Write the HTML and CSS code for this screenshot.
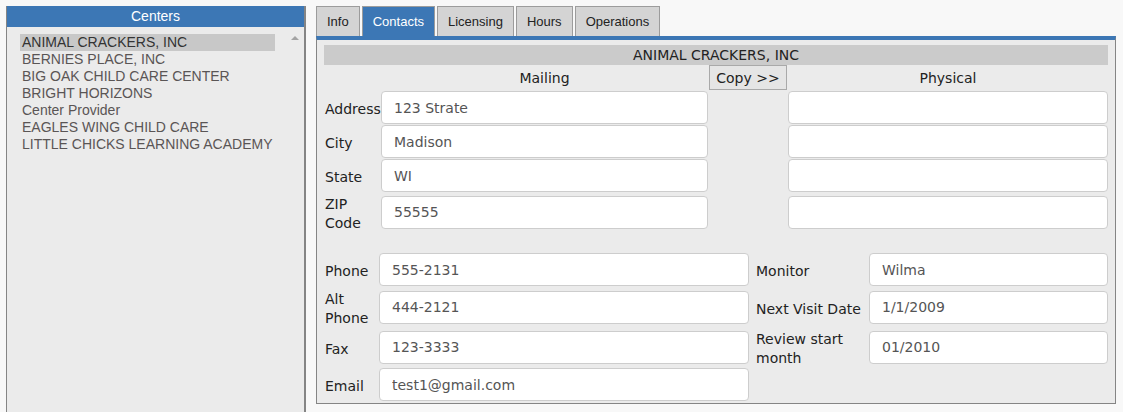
FILE: index.html
```html
<!DOCTYPE html>
<html lang="en">
<head>
<meta charset="utf-8">
<title>Centers - Contacts</title>
<link rel="stylesheet" href="styles.css">
</head>
<body>
<div class="page">
  <aside class="centers">
    <div class="centers-head">Centers</div>
    <div class="centers-body">
      <ul class="center-list">
        <li class="selected">ANIMAL CRACKERS, INC</li>
        <li>BERNIES PLACE, INC</li>
        <li>BIG OAK CHILD CARE CENTER</li>
        <li>BRIGHT HORIZONS</li>
        <li>Center Provider</li>
        <li>EAGLES WING CHILD CARE</li>
        <li>LITTLE CHICKS LEARNING ACADEMY</li>
      </ul>
      <div class="scroll"><span class="arrow"></span></div>
    </div>
  </aside>

  <section class="detail">
    <nav class="tabs">
      <span class="tab">Info</span>
      <span class="tab active">Contacts</span>
      <span class="tab">Licensing</span>
      <span class="tab">Hours</span>
      <span class="tab">Operations</span>
    </nav>
    <div class="tab-body">
      <div class="title">ANIMAL CRACKERS, INC</div>

      <div class="addr-grid">
        <span></span>
        <div class="col-head">Mailing</div>
        <div class="copy-cell"><button class="copy" type="button">Copy &gt;&gt;</button></div>
        <div class="col-head">Physical</div>

        <label class="lbl">Address</label>
        <input class="field" type="text" value="123 Strate">
        <span></span>
        <input class="field" type="text" value="">

        <label class="lbl">City</label>
        <input class="field" type="text" value="Madison">
        <span></span>
        <input class="field" type="text" value="">

        <label class="lbl">State</label>
        <input class="field" type="text" value="WI">
        <span></span>
        <input class="field" type="text" value="">

        <label class="lbl">ZIP Code</label>
        <input class="field" type="text" value="55555">
        <span></span>
        <input class="field" type="text" value="">
      </div>

      <div class="contact-grid">
        <label class="lbl">Phone</label>
        <input class="field" type="text" value="555-2131">
        <label class="lbl lbl2">Monitor</label>
        <input class="field" type="text" value="Wilma">

        <label class="lbl">Alt Phone</label>
        <input class="field" type="text" value="444-2121">
        <label class="lbl lbl2">Next Visit Date</label>
        <input class="field" type="text" value="1/1/2009">

        <label class="lbl">Fax</label>
        <input class="field" type="text" value="123-3333">
        <label class="lbl lbl2">Review start month</label>
        <input class="field" type="text" value="01/2010">

        <label class="lbl">Email</label>
        <input class="field" type="text" value="test1@gmail.com">
        <span></span>
        <span></span>
      </div>
    </div>
  </section>
</div>
</body>
</html>
```

FILE: styles.css
```css
html, body {
  margin: 0;
  padding: 0;
  height: 100%;
  overflow: hidden;
  background: #f8f8f8;
}

.page {
  display: flex;
  align-items: flex-start;
  gap: 10px;
  padding: 6px 0 0 6px;
}

/* ---------- Centers list ---------- */
.centers {
  width: 300px;
  height: 420px;
  box-sizing: border-box;
  border: 1px solid #858585;
  border-top: 0;
  border-right-width: 2px;
  background: #ebebeb;
  font-family: "Liberation Sans", Arial, sans-serif;
  display: flex;
  flex-direction: column;
}

.centers-head {
  height: 21px;
  line-height: 21px;
  background: #3c77b5;
  color: #fff;
  font-size: 14px;
  text-align: center;
}

.centers-body {
  display: flex;
  padding-top: 7px;
}

.center-list {
  list-style: none;
  margin: 0 0 0 13px;
  padding: 0;
  width: 255px;
}

.center-list li {
  height: 17px;
  line-height: 17px;
  padding-left: 2px;
  font-size: 14px;
  color: #5a5555;
  white-space: nowrap;
}

.center-list li.selected {
  background: #c8c8c8;
  color: #333;
}

.scroll {
  flex: 1;
  display: flex;
  justify-content: flex-end;
  padding: 2px 5px 0 0;
}

.arrow {
  width: 0;
  height: 0;
  border-left: 4px solid transparent;
  border-right: 4px solid transparent;
  border-bottom: 4px solid #a3a3a3;
}

/* ---------- Detail panel ---------- */
.detail {
  width: 800px;
  display: flex;
  flex-direction: column;
}

.tabs {
  display: flex;
  gap: 2px;
  height: 30px;
}

.tab {
  box-sizing: border-box;
  height: 30px;
  padding: 0 10px;
  line-height: 29px;
  border: 1px solid #9c9c9c;
  border-bottom: 0;
  background: #d4d4d4;
  color: #222;
  font-family: "Liberation Sans", Arial, sans-serif;
  font-size: 13px;
}

.tab.active {
  background: #3c77b5;
  color: #fff;
}

.tab-body {
  border: 1px solid #858585;
  border-top: 4px solid #3c77b5;
  background: #ebebeb;
  padding: 5px 7px 2px 7px;
  font-family: "DejaVu Sans", Verdana, sans-serif;
  font-size: 14px;
  color: #222;
}

.title {
  box-sizing: border-box;
  height: 20px;
  padding-top: 1px;
  line-height: 19px;
  background: #cbcbcb;
  text-align: center;
  color: #222;
}

.addr-grid {
  display: grid;
  grid-template-columns: 57px 327px 80px 320px;
  grid-template-rows: 25px;
  row-gap: 1px;
  align-items: center;
}

.col-head {
  box-sizing: border-box;
  height: 25px;
  padding-top: 1px;
  text-align: center;
  line-height: 25px;
}

.copy-cell {
  display: flex;
  height: 25px;
}

.copy {
  width: 78px;
  height: 25px;
  margin-left: 1px;
  padding: 1px 0 0;
  border: 1px solid #a9a9a9;
  background: #e5e5e5;
  font-family: "DejaVu Sans", Verdana, sans-serif;
  font-size: 14px;
  color: #222;
}

.lbl {
  line-height: 19px;
  padding-left: 1px;
  padding-top: 2px;
  margin-bottom: -2px;
  color: #222;
}

.field {
  box-sizing: border-box;
  width: 100%;
  height: 33px;
  margin: 0;
  padding: 0 12px;
  border: 1px solid #cdcdcd;
  border-radius: 4px;
  background: #fff;
  font-family: "DejaVu Sans", Verdana, sans-serif;
  font-size: 14px;
  color: #555;
  outline: none;
}

.contact-grid {
  display: grid;
  grid-template-columns: 55px 370px 120px 239px;
  row-gap: 2px;
  align-items: center;
  margin-top: 22px;
}

.lbl2 {
  padding-left: 7px;
}
```
